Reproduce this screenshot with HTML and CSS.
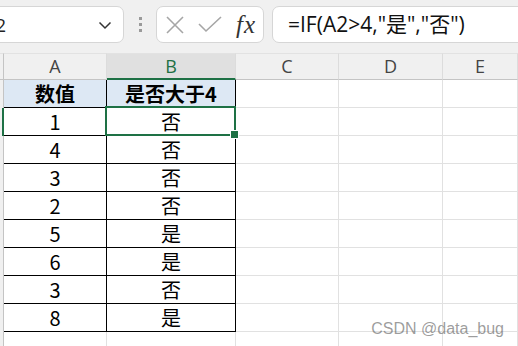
FILE: index.html
```html
<!DOCTYPE html>
<html lang="zh-cn">
<head>
  <meta charset="UTF-8">
  <meta name="viewport" content="width=device-width, initial-scale=1.0">
  <link rel="stylesheet" href="styles.css">
  <title>Excel</title>
</head>
<body>
<div class="janela">
  <!--barra de formula-->
  <div class="barra">
    <div class="caixa-nome">
      <span class="nome">B2</span>
      <svg class="seta" width="14" height="10" viewBox="0 0 14 10"><path d="M1.5 2.5 L7 8 L12.5 2.5" fill="none" stroke="#333" stroke-width="1.5"/></svg>
    </div>
    <div class="pontos"><i></i><i></i><i></i></div>
    <div class="caixa-icones">
      <svg width="18" height="18" viewBox="0 0 18 18"><path d="M1 1 L17 17 M17 1 L1 17" stroke="#a6a6a6" stroke-width="1.6"/></svg>
      <svg width="24" height="18" viewBox="0 0 24 18"><path d="M1 8 L8 15 L23 1" fill="none" stroke="#a6a6a6" stroke-width="1.6"/></svg>
      <span class="fx">fx</span>
    </div>
    <div class="caixa-formula">=IF(A2&gt;4,"是","否")</div>
  </div>

  <!--planilha-->
  <div class="planilha">
    <div class="cab canto"></div>
    <div class="cab">A</div>
    <div class="cab ativo">B</div>
    <div class="cab">C</div>
    <div class="cab">D</div>
    <div class="cab">E</div>

    <div class="lin"></div>
    <div class="cel tab titulo">数值</div>
    <div class="cel tab titulo">是否大于4</div>
    <div class="cel"></div><div class="cel"></div><div class="cel"></div>

    <div class="lin ativo"></div>
    <div class="cel tab">1</div>
    <div class="cel tab sel">否</div>
    <div class="cel"></div><div class="cel"></div><div class="cel"></div>

    <div class="lin"></div>
    <div class="cel tab">4</div>
    <div class="cel tab">否</div>
    <div class="cel"></div><div class="cel"></div><div class="cel"></div>

    <div class="lin"></div>
    <div class="cel tab">3</div>
    <div class="cel tab">否</div>
    <div class="cel"></div><div class="cel"></div><div class="cel"></div>

    <div class="lin"></div>
    <div class="cel tab">2</div>
    <div class="cel tab">否</div>
    <div class="cel"></div><div class="cel"></div><div class="cel"></div>

    <div class="lin"></div>
    <div class="cel tab">5</div>
    <div class="cel tab">是</div>
    <div class="cel"></div><div class="cel"></div><div class="cel"></div>

    <div class="lin"></div>
    <div class="cel tab">6</div>
    <div class="cel tab">是</div>
    <div class="cel"></div><div class="cel"></div><div class="cel"></div>

    <div class="lin"></div>
    <div class="cel tab">3</div>
    <div class="cel tab">否</div>
    <div class="cel"></div><div class="cel"></div><div class="cel"></div>

    <div class="lin"></div>
    <div class="cel tab">8</div>
    <div class="cel tab">是</div>
    <div class="cel"></div><div class="cel"></div><div class="cel"></div>

    <div class="lin"></div>
    <div class="cel"></div><div class="cel"></div>
    <div class="cel"></div><div class="cel"></div><div class="cel"></div>
  </div>

  <div class="marca">CSDN @data_bug</div>
</div>
</body>
</html>
```

FILE: styles.css
```css
*{
  margin: 0;
  padding: 0;
  box-sizing: border-box;
}
body{
  background: #fff;
  font-family: "Noto Sans CJK SC", "Noto Sans", sans-serif;
}
.janela{
  position: relative;
  width: 518px;
  height: 346px;
  overflow: hidden;
}

/* barra de formula */
.barra{
  height: 53px;
  background: #f0f0f0;
  display: flex;
  align-items: flex-start;
  padding-top: 6px;
}
.caixa-nome{
  width: 144px;
  height: 37px;
  margin-left: -20px;
  background: #fff;
  border: 1px solid #d6d6d6;
  border-radius: 7px;
  display: flex;
  align-items: center;
  justify-content: space-between;
  padding: 0 11px 0 3px;
  font-family: "Open Sans", sans-serif;
  font-size: 18px;
  color: #222;
}
.pontos{
  width: 32px;
  height: 37px;
  display: flex;
  flex-direction: column;
  align-items: center;
  justify-content: center;
  gap: 3px;
}
.pontos i{
  width: 3px;
  height: 3px;
  background: #9a9a9a;
}
.caixa-icones{
  width: 108px;
  height: 37px;
  background: #fff;
  border: 1px solid #d6d6d6;
  border-radius: 7px;
  display: flex;
  align-items: center;
  padding-left: 9px;
  gap: 14px;
}
.fx{
  font-family: "Liberation Serif", serif;
  font-style: italic;
  font-size: 25px;
  color: #333;
  letter-spacing: 1px;
}
.caixa-formula{
  flex: 1;
  height: 37px;
  margin-left: 8px;
  margin-right: -10px;
  background: #fff;
  border: 1px solid #d6d6d6;
  border-radius: 7px;
  padding-left: 15px;
  font-family: "Open Sans", "Noto Sans CJK SC", sans-serif;
  font-size: 21px;
  line-height: 35px;
  color: #111;
}

/* planilha */
.planilha{
  display: grid;
  grid-template-columns: 4px 103px 129px 103px 104px 1fr;
  grid-template-rows: 27px;
  grid-auto-rows: 28px;
}
.cab{
  background: #f0f0f0;
  border-top: 1px solid #e2e2e2;
  border-right: 1px solid #dcdcdc;
  border-bottom: 1px solid #c4c4c4;
  font-family: "Open Sans", sans-serif;
  font-size: 18px;
  color: #444;
  text-align: center;
  line-height: 25px;
}
.cab.canto{
  border-right: 1px solid #c4c4c4;
}
.cab.ativo{
  background: #e0e0e0;
  color: #1e7145;
  border-bottom: 2px solid #1e7145;
}
.lin{
  background: #f0f0f0;
  border-right: 1px solid #c4c4c4;
}
.lin.ativo{
  border-right: 2px solid #1e7145;
}
.cel{
  border-right: 1px solid #e1e1e1;
  border-bottom: 1px solid #e1e1e1;
  text-align: center;
  font-size: 20px;
  line-height: 27px;
  color: #000;
}
.cel.tab{
  border-right: 1px solid #000;
  border-bottom: 1px solid #000;
}
.titulo{
  background: #dde8f4;
  font-weight: bold;
}
.sel{
  position: relative;
}
.sel::after{
  content: "";
  position: absolute;
  top: -2px;
  left: -2px;
  right: -1px;
  bottom: -1px;
  border: 2px solid #1e7145;
}
.sel::before{
  content: "";
  position: absolute;
  right: -4px;
  bottom: -4px;
  width: 7px;
  height: 7px;
  background: #1e7145;
  border: 1px solid #fff;
  z-index: 1;
}

.marca{
  position: absolute;
  right: 14px;
  bottom: 8px;
  font-family: "Liberation Sans", sans-serif;
  font-size: 16px;
  color: rgba(90, 90, 90, 0.6);
}
```
